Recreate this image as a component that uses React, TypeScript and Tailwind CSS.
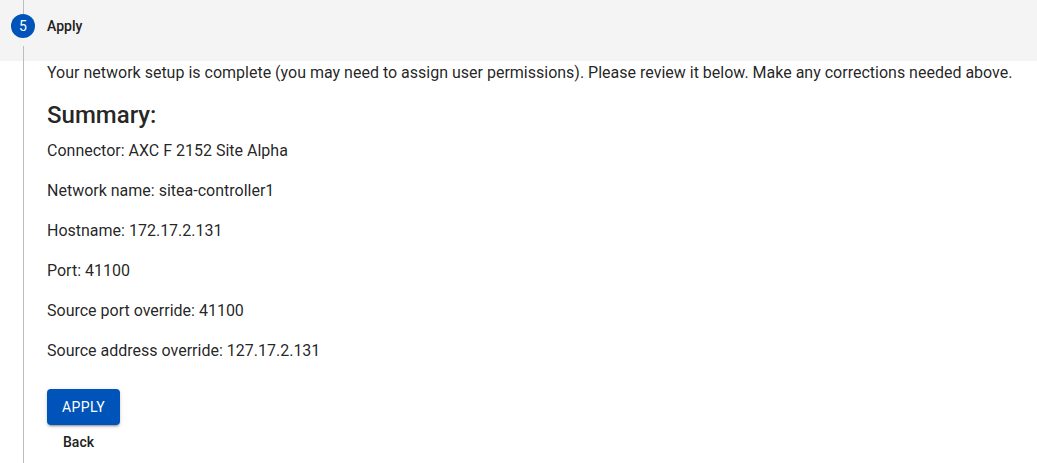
import React from "react";

const rows = [
  "Connector: AXC F 2152 Site Alpha",
  "Network name: sitea-controller1",
  "Hostname: 172.17.2.131",
  "Port: 41100",
  "Source port override: 41100",
  "Source address override: 127.17.2.131",
];

export default function App() {
  return (
    <div
      className="w-[1037px] h-[463px] bg-white text-[rgba(0,0,0,0.87)] overflow-hidden"
      style={{ fontFamily: "Roboto, 'Liberation Sans', sans-serif" }}
    >
      {/* Step header */}
      <div className="flex h-[61px] bg-[#f4f4f4]">
        <div className="w-[47px] flex flex-col items-center shrink-0">
          <div className="w-px h-[14px] bg-[#bdbdbd] ml-[-1px]" />
          <div className="w-6 h-6 rounded-full bg-[#0053b8] text-white text-[14px] flex items-center justify-center ml-[-1px]">
            5
          </div>
          <div className="w-px flex-1 bg-[#bdbdbd] mt-2 ml-[-1px]" />
        </div>
        <div className="pt-[14px] h-[38px] flex items-center text-[14px] font-medium text-[#212121]">
          Apply
        </div>
      </div>

      {/* Step content */}
      <div className="flex h-[402px]">
        <div className="w-[47px] shrink-0 flex justify-center">
          <div className="w-px h-full bg-[#bdbdbd] ml-[-1px]" />
        </div>
        <div className="flex flex-col items-start">
          <p className="text-[16px] leading-6">
            Your network setup is complete (you may need to assign user permissions). Please review it below. Make any corrections needed above.
          </p>
          <h5 className="text-[24px] leading-8 font-medium mt-[14px] mb-[8px]">Summary:</h5>
          {rows.map((r) => (
            <p key={r} className="text-[16px] leading-6 mb-4">
              {r}
            </p>
          ))}
          <button className="mt-[10px] h-[36px] w-[73px] rounded bg-[#0053b8] text-white text-[14px] font-normal uppercase tracking-[0.4px] shadow-[0_3px_1px_-2px_rgba(0,0,0,0.2),0_2px_2px_0_rgba(0,0,0,0.14),0_1px_5px_0_rgba(0,0,0,0.12)]">
            Apply
          </button>
          <button className="mt-[-1px] h-[36px] px-4 text-[14px] font-medium text-[#212121]">
            Back
          </button>
        </div>
      </div>
    </div>
  );
}
